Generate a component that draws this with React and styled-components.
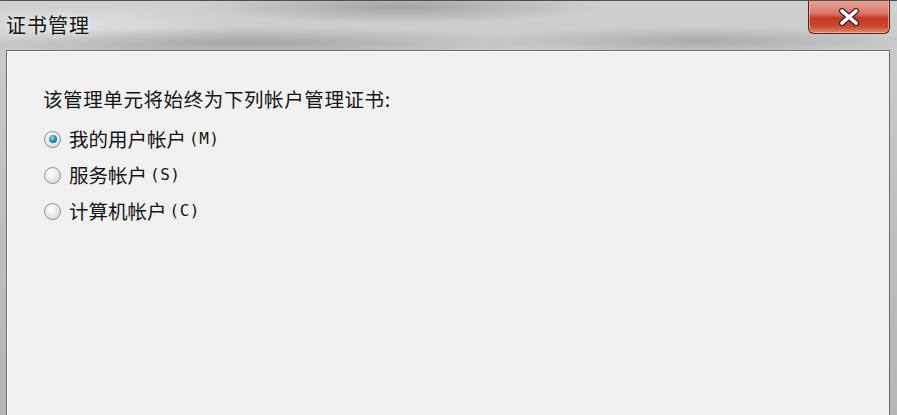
import React, { useState } from 'react';
import styled, { createGlobalStyle } from 'styled-components';

const GlobalStyle = createGlobalStyle`
  html, body {
    margin: 0;
    padding: 0;
    background: #c2c2c2;
  }
  body {
    font-family: "Noto Sans CJK SC", "Liberation Sans", sans-serif;
  }
`;

const Window = styled.div`
  width: 897px;
  height: 415px;
  display: flex;
  flex-direction: column;
  overflow: hidden;
  box-sizing: border-box;
  border-top: 1px solid #4f4f4f;
  background:
    radial-gradient(ellipse 200px 16px at 400px 6px, rgba(100, 100, 100, 0.4), transparent),
    radial-gradient(ellipse 280px 16px at 250px 42px, rgba(80, 80, 80, 0.3), transparent),
    radial-gradient(ellipse 220px 14px at 700px 40px, rgba(95, 95, 95, 0.3), transparent),
    radial-gradient(ellipse 160px 22px at 80px 24px, rgba(255, 255, 255, 0.35), transparent),
    linear-gradient(to bottom, #cfcfcf 0%, #c0c0c0 45%, #b6b6b6 100%);
`;

const TitleBar = styled.div`
  height: 49px;
  display: flex;
  align-items: flex-start;
  justify-content: space-between;
  padding: 0 7px 0 6px;
  flex-shrink: 0;
`;

const Title = styled.div`
  margin-top: 10px;
  font-size: 20px;
  line-height: 28px;
  color: #141414;
  letter-spacing: 1px;
  text-shadow: 0 0 6px rgba(255, 255, 255, 0.9);
`;

const CloseButton = styled.button`
  width: 82px;
  height: 34px;
  margin-top: -1px;
  border: 1px solid #4a2320;
  border-top: none;
  border-radius: 0 0 6px 6px;
  background: linear-gradient(
    to bottom,
    #eaa89c 0%,
    #d9786a 40%,
    #c5381f 55%,
    #c84a30 80%,
    #e08a6e 100%
  );
  box-shadow: inset 0 0 0 1px rgba(255, 200, 190, 0.6);
  display: flex;
  align-items: center;
  justify-content: center;
  padding: 0;
  cursor: pointer;
`;

const Client = styled.div`
  flex: 1;
  margin: 0 7px 0 6px;
  border: 1px solid #6b6b6b;
  border-bottom: none;
  box-shadow: inset 1px 1px 0 #ffffff;
  background: #f0f0f0;
  padding: 35px 0 0 36px;
  display: flex;
  flex-direction: column;
`;

const Prompt = styled.div`
  font-size: 19.5px;
  letter-spacing: 0.6px;
  color: #141414;
  line-height: 26px;
  height: 26px;
  margin-bottom: 9px;
`;

const Options = styled.div`
  display: flex;
  flex-direction: column;
`;

const Option = styled.label`
  display: flex;
  align-items: center;
  gap: 8px;
  height: 36px;
  font-size: 19.5px;
  color: #141414;
  cursor: pointer;
`;

const Radio = styled.span`
  width: 15px;
  height: 15px;
  border-radius: 50%;
  border: 1px solid #8f8f8f;
  background: radial-gradient(circle at 40% 35%, #ffffff 0%, #e6e6e6 55%, #cfcfcf 100%);
  display: flex;
  align-items: center;
  justify-content: center;
  flex-shrink: 0;
  margin-left: 1px;

  &::after {
    content: '';
    width: 8px;
    height: 8px;
    border-radius: 50%;
    background: radial-gradient(circle at 40% 35%, #9fe0f5 0%, #2a8bc0 50%, #0f4f7a 100%);
    display: ${p => (p.$checked ? 'block' : 'none')};
  }
`;

const Label = styled.span`
  display: flex;
  align-items: center;
  line-height: 26px;
`;

const Accel = styled.span`
  font-family: "DejaVu Sans Mono", "Liberation Mono", monospace;
  font-size: 16px;
  margin-left: 3px;
  letter-spacing: 0.5px;
`;

const CloseIcon = () => (
  <svg width="22" height="18" viewBox="0 0 22 18">
    <path
      d="M4 3 L18 15 M18 3 L4 15"
      stroke="#3a2220"
      strokeWidth="6"
      strokeLinecap="round"
    />
    <path
      d="M4 3 L18 15 M18 3 L4 15"
      stroke="#ffffff"
      strokeWidth="3.6"
      strokeLinecap="round"
    />
  </svg>
);

const options = [
  { id: 'user', label: '我的用户帐户', key: 'M' },
  { id: 'service', label: '服务帐户', key: 'S' },
  { id: 'computer', label: '计算机帐户', key: 'C' },
];

const App = () => {
  const [selected, setSelected] = useState('user');

  return (
    <>
      <GlobalStyle />
      <Window>
        <TitleBar>
          <Title>证书管理</Title>
          <CloseButton aria-label="关闭">
            <CloseIcon />
          </CloseButton>
        </TitleBar>
        <Client>
          <Prompt>该管理单元将始终为下列帐户管理证书:</Prompt>
          <Options>
            {options.map(o => (
              <Option key={o.id} onClick={() => setSelected(o.id)}>
                <Radio $checked={selected === o.id} />
                <Label>
                  {o.label}
                  <Accel>({o.key})</Accel>
                </Label>
              </Option>
            ))}
          </Options>
        </Client>
      </Window>
    </>
  );
};

export default App;
